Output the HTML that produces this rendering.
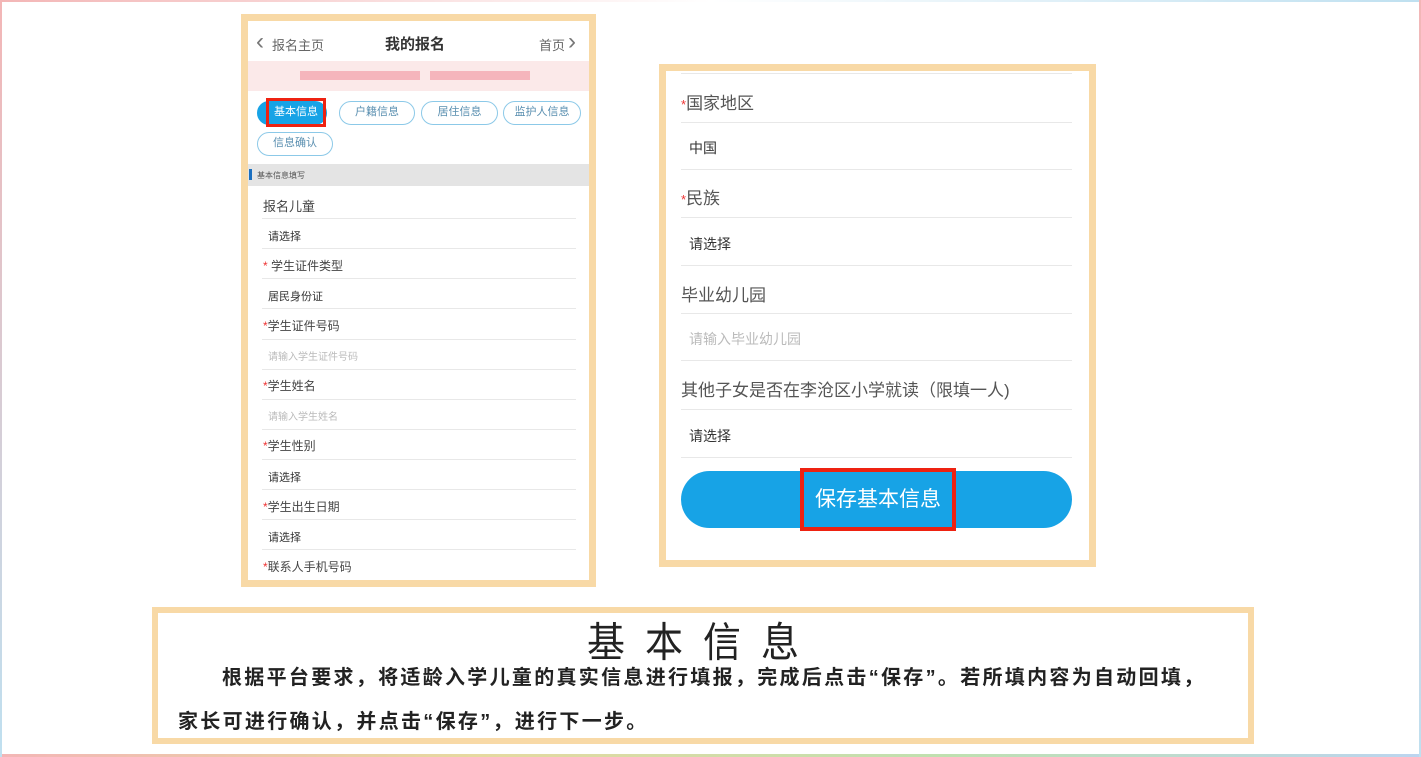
<!DOCTYPE html>
<html><head><meta charset="utf-8"><style>
*{margin:0;padding:0;box-sizing:border-box}
body{width:1421px;height:757px;background:#fff;position:relative;overflow:hidden;font-family:"Liberation Sans","Noto Sans CJK SC",sans-serif;color:#444}
.a{position:absolute;white-space:nowrap}
.frame{position:absolute;border:7px solid #f8d9a6;background:#fff}
.line{position:absolute;height:1px;background:#e8e8e8}
.r{color:#e33}
.pill{position:absolute;height:24px;border:1.5px solid #8cc9e8;border-radius:12px;font-size:11px;color:#5a8fb0;text-align:center;line-height:21px}
</style></head><body>
<div class="a" style="left:0;top:0;width:1421px;height:2px;background:linear-gradient(90deg,#f3b6b6,#fff,#bfe0f0)"></div>
<div class="a" style="left:0;bottom:0;width:1421px;height:3px;background:linear-gradient(90deg,#f3b6b6,#e6d9a0,#bfe0b0,#bcd5f0)"></div>
<div class="a" style="left:0;top:0;width:2px;height:757px;background:linear-gradient(#f3b6b6,#bfe0f0)"></div>
<div class="a" style="right:0;top:0;width:2px;height:757px;background:linear-gradient(#f3b6b6,#bfe0f0)"></div>

<!-- left phone -->
<div class="frame" style="left:241px;top:14px;width:355px;height:573px"></div>
<div class="a" style="left:256px;top:28px;font-size:24px;color:#777">&lsaquo;</div>
<div class="a" style="left:272px;top:35px;font-size:13px;color:#666">报名主页</div>
<div class="a" style="left:385px;top:33px;font-size:15px;font-weight:bold;color:#333">我的报名</div>
<div class="a" style="left:539px;top:35px;font-size:13px;color:#666">首页</div>
<div class="a" style="left:568px;top:28px;font-size:24px;color:#777">&rsaquo;</div>
<div class="a" style="left:248px;top:61px;width:341px;height:30px;background:#fbe9e9"></div>
<div class="a" style="left:300px;top:71px;width:120px;height:9px;background:#f4a8b0;opacity:.8"></div>
<div class="a" style="left:430px;top:71px;width:100px;height:9px;background:#f4a8b0;opacity:.8"></div>
<div class="pill" style="left:257px;top:101px;width:70px;background:#17a3e6;border-color:#17a3e6;color:#fff"></div>
<div class="a" style="left:266px;top:98px;width:60px;height:29px;border:3px solid #e21;font-size:11px;color:#fff;text-align:center;line-height:23px">基本信息</div>
<div class="pill" style="left:339px;top:101px;width:76px">户籍信息</div>
<div class="pill" style="left:421px;top:101px;width:77px">居住信息</div>
<div class="pill" style="left:503px;top:101px;width:78px">监护人信息</div>
<div class="pill" style="left:257px;top:132px;width:76px">信息确认</div>
<div class="a" style="left:248px;top:164px;width:341px;height:22px;background:#e4e4e4"></div>
<div class="a" style="left:249px;top:169px;width:3px;height:11px;background:#1a6fc0"></div>
<div class="a" style="left:257px;top:170px;font-size:8px;color:#555">基本信息填写</div>
<div class="a" style="left:263px;top:196px;font-size:13px">报名儿童</div>
<div class="line" style="left:262px;top:218px;width:314px"></div>
<div class="a" style="left:268px;top:228px;font-size:11px;color:#333">请选择</div>
<div class="line" style="left:262px;top:248px;width:314px"></div>
<div class="a" style="left:263px;top:257px;font-size:12px"><span class="r">* </span>学生证件类型</div>
<div class="line" style="left:262px;top:278px;width:314px"></div>
<div class="a" style="left:268px;top:288px;font-size:11px;color:#333">居民身份证</div>
<div class="line" style="left:262px;top:308px;width:314px"></div>
<div class="a" style="left:263px;top:317px;font-size:12px"><span class="r">*</span>学生证件号码</div>
<div class="line" style="left:262px;top:339px;width:314px"></div>
<div class="a" style="left:268px;top:348px;font-size:10px;color:#bbb">请输入学生证件号码</div>
<div class="line" style="left:262px;top:369px;width:314px"></div>
<div class="a" style="left:263px;top:377px;font-size:12px"><span class="r">*</span>学生姓名</div>
<div class="line" style="left:262px;top:399px;width:314px"></div>
<div class="a" style="left:268px;top:408px;font-size:10px;color:#bbb">请输入学生姓名</div>
<div class="line" style="left:262px;top:429px;width:314px"></div>
<div class="a" style="left:263px;top:437px;font-size:12px"><span class="r">*</span>学生性别</div>
<div class="line" style="left:262px;top:459px;width:314px"></div>
<div class="a" style="left:268px;top:469px;font-size:11px;color:#333">请选择</div>
<div class="line" style="left:262px;top:489px;width:314px"></div>
<div class="a" style="left:263px;top:498px;font-size:12px"><span class="r">*</span>学生出生日期</div>
<div class="line" style="left:262px;top:519px;width:314px"></div>
<div class="a" style="left:268px;top:529px;font-size:11px;color:#333">请选择</div>
<div class="line" style="left:262px;top:549px;width:314px"></div>
<div class="a" style="left:263px;top:558px;font-size:12px"><span class="r">*</span>联系人手机号码</div>

<!-- right -->
<div class="frame" style="left:659px;top:64px;width:437px;height:503px"></div>
<div class="line" style="left:681px;top:73px;width:391px"></div>
<div class="a" style="left:681px;top:89px;font-size:17px;color:#555"><span class="r" style="font-size:13px">*</span>国家地区</div>
<div class="line" style="left:681px;top:122px;width:391px"></div>
<div class="a" style="left:689px;top:138px;font-size:14px;color:#333">中国</div>
<div class="line" style="left:681px;top:169px;width:391px"></div>
<div class="a" style="left:681px;top:184px;font-size:17px;color:#555"><span class="r" style="font-size:13px">*</span>民族</div>
<div class="line" style="left:681px;top:217px;width:391px"></div>
<div class="a" style="left:689px;top:234px;font-size:14px;color:#333">请选择</div>
<div class="line" style="left:681px;top:265px;width:391px"></div>
<div class="a" style="left:681px;top:281px;font-size:17px;color:#555">毕业幼儿园</div>
<div class="line" style="left:681px;top:313px;width:391px"></div>
<div class="a" style="left:689px;top:329px;font-size:14px;color:#bbb">请输入毕业幼儿园</div>
<div class="line" style="left:681px;top:360px;width:391px"></div>
<div class="a" style="left:681px;top:376px;font-size:17px;color:#555">其他子女是否在李沧区小学就读（限填一人)</div>
<div class="line" style="left:681px;top:409px;width:391px"></div>
<div class="a" style="left:689px;top:426px;font-size:14px;color:#333">请选择</div>
<div class="line" style="left:681px;top:457px;width:391px"></div>
<div class="a" style="left:681px;top:471px;width:391px;height:57px;border-radius:29px;background:#17a3e6"></div>
<div class="a" style="left:800px;top:468px;width:156px;height:63px;border:4px solid #e21;color:#fff;font-size:21px;text-align:center;line-height:55px">保存基本信息</div>

<!-- bottom -->
<div class="frame" style="left:152px;top:607px;width:1102px;height:137px;border-width:6px"></div>
<div class="a" style="left:0;width:1406px;top:611px;text-align:center;font-size:38px;letter-spacing:20px;color:#222;transform:scaleY(1.08)">基本信息</div>
<div class="a" style="left:222px;top:661px;font-size:20px;letter-spacing:2.3px;font-weight:bold;color:#222">根据平台要求，将适龄入学儿童的真实信息进行填报，完成后点击“保存”。若所填内容为自动回填，</div>
<div class="a" style="left:178px;top:705px;font-size:20px;letter-spacing:2.3px;font-weight:bold;color:#222">家长可进行确认，并点击“保存”，进行下一步。</div>
</body></html>
